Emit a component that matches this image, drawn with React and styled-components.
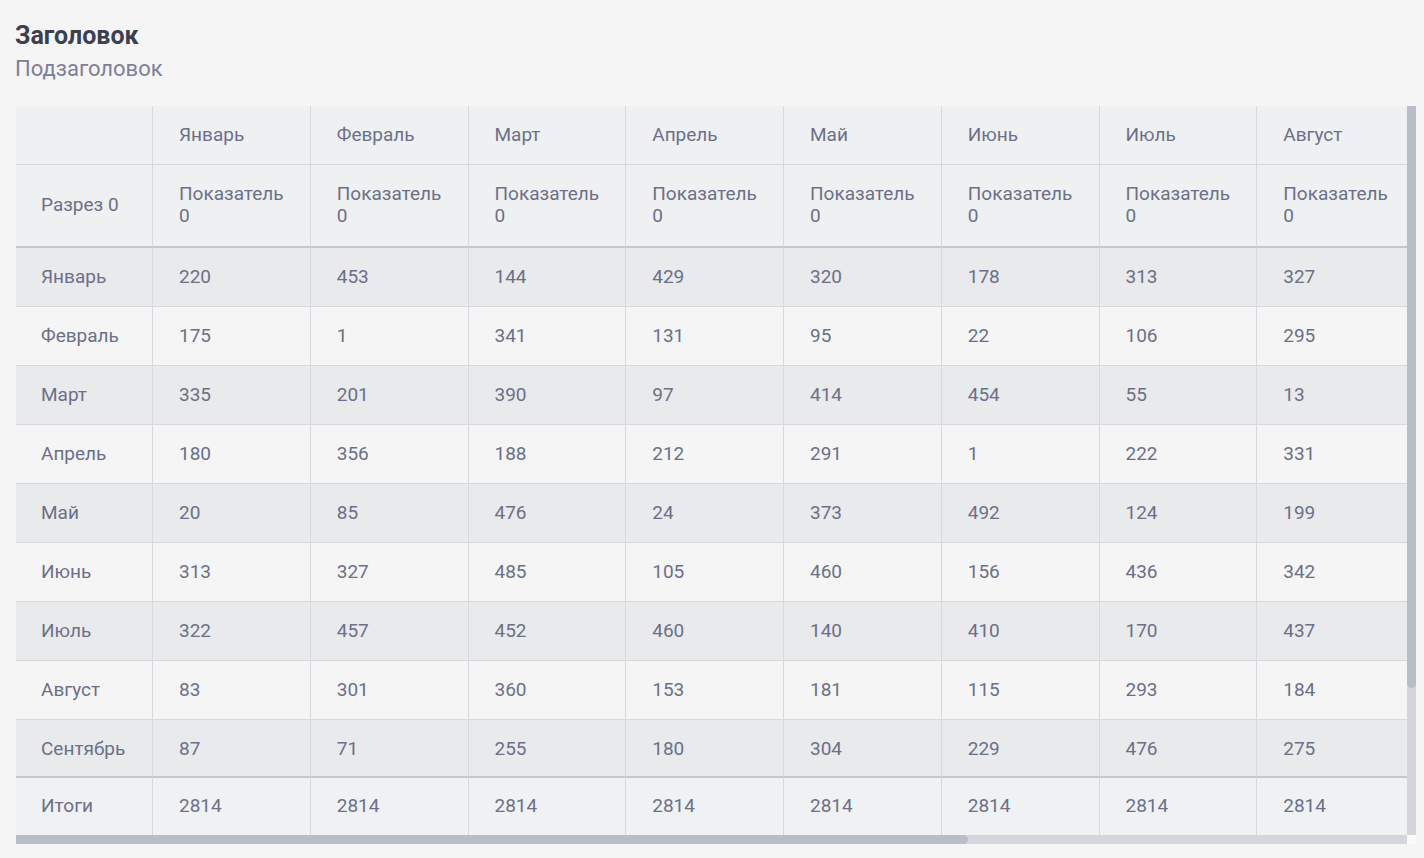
import React from 'react'
import styled, { createGlobalStyle } from 'styled-components'

const MONTHS = [
  'Январь', 'Февраль', 'Март', 'Апрель', 'Май', 'Июнь',
  'Июль', 'Август', 'Сентябрь', 'Октябрь', 'Ноябрь', 'Декабрь',
]

// visible part of the grid: 9 rows x 8 columns
const DATA = [
  [220, 453, 144, 429, 320, 178, 313, 327],
  [175, 1, 341, 131, 95, 22, 106, 295],
  [335, 201, 390, 97, 414, 454, 55, 13],
  [180, 356, 188, 212, 291, 1, 222, 331],
  [20, 85, 476, 24, 373, 492, 124, 199],
  [313, 327, 485, 105, 460, 156, 436, 342],
  [322, 457, 452, 460, 140, 410, 170, 437],
  [83, 301, 360, 153, 181, 115, 293, 184],
  [87, 71, 255, 180, 304, 229, 476, 275],
]

const COLS = MONTHS.slice(0, 8)
const ROWS = MONTHS.slice(0, 9)

const GlobalStyle = createGlobalStyle`
  body {
    margin: 0;
    background: #f5f5f5;
    font-family: Roboto, "Noto Sans", sans-serif;
  }
`

const Page = styled.div`
  padding: 21px 8px 14px 16px;
`

const Title = styled.h1`
  margin: 0 0 0 -1px;
  font-size: 25px;
  line-height: 30px;
  font-weight: 700;
  color: #3b404e;
`

const Subtitle = styled.div`
  margin: 4px 0 0 -1px;
  font-size: 22px;
  line-height: 28px;
  color: #7b8098;
`

const Frame = styled.div`
  margin-top: 23px;
  display: grid;
  grid-template-columns: 1391px 9px;
  grid-template-rows: 729px 9px;
`

const Viewport = styled.div`
  overflow: hidden;
  position: relative;
`

const Track = styled.div`
  background: #d4d6db;
  display: flex;
  flex-direction: ${(p) => (p.$vertical ? 'column' : 'row')};
`

const Thumb = styled.div`
  background: #b9bdc6;
  border-radius: ${(p) => (p.$vertical ? '0 0 5px 5px' : '0 5px 5px 0')};
  ${(p) => (p.$vertical ? `height: ${p.$size}px;` : `width: ${p.$size}px;`)}
`

const Corner = styled.div`
  background: #fafafa;
`

const Table = styled.table`
  border-collapse: separate;
  border-spacing: 0;
  table-layout: fixed;
  width: ${137 + 157.75 * 8}px;
  font-size: 19px;
  line-height: 22px;
  color: #6b7088;
`

const Cell = styled.td`
  padding: 18px 20px 18px 26px;
  border-right: 1px solid #d7d9de;
  border-bottom: 1px solid #d7d9de;
  text-align: left;
  font-weight: 400;
  white-space: nowrap;
  vertical-align: ${(p) => (p.$top ? 'top' : 'middle')};
  background: ${(p) => p.$bg};

  &:first-child {
    padding-left: 25px;
  }
`

const HeadCell = styled(Cell).attrs({ as: 'th' })`
  background: #eff0f2;
`

const SubHeadCell = styled(HeadCell)`
  padding-bottom: 19px;
  border-bottom: 2px solid #c4c7ce;
  white-space: normal;
`

const FootCell = styled(Cell)`
  position: sticky;
  bottom: 0;
  padding: 17px 20px 18px 26px;
  background: #f0f1f3;
  border-top: 2px solid #c4c7ce;
  border-bottom: none;
`

export default function App() {
  return (
    <>
      <GlobalStyle />
      <Page>
        <Title>Заголовок</Title>
        <Subtitle>Подзаголовок</Subtitle>
        <Frame>
          <Viewport>
            <Table>
              <colgroup>
                <col style={{ width: 137 }} />
                {COLS.map((m) => (
                  <col key={m} style={{ width: 157.75 }} />
                ))}
              </colgroup>
              <thead>
                <tr>
                  <HeadCell />
                  {COLS.map((m) => (
                    <HeadCell key={m}>{m}</HeadCell>
                  ))}
                </tr>
                <tr>
                  <SubHeadCell>Разрез 0</SubHeadCell>
                  {COLS.map((m) => (
                    <SubHeadCell key={m} $top>
                      Показатель 0
                    </SubHeadCell>
                  ))}
                </tr>
              </thead>
              <tbody>
                {ROWS.map((m, i) => {
                  const bg = i % 2 === 0 ? '#e9eaec' : '#f5f5f6'
                  return (
                    <tr key={m}>
                      <Cell $bg={bg}>{m}</Cell>
                      {DATA[i].map((v, j) => (
                        <Cell key={j} $bg={bg}>{v}</Cell>
                      ))}
                    </tr>
                  )
                })}
              </tbody>
              <tfoot>
                <tr>
                  <FootCell>Итоги</FootCell>
                  {COLS.map((m) => (
                    <FootCell key={m}>2814</FootCell>
                  ))}
                </tr>
              </tfoot>
            </Table>
          </Viewport>
          <Track $vertical>
            <Thumb $vertical $size={582} />
          </Track>
          <Track>
            <Thumb $size={952} />
          </Track>
          <Corner />
        </Frame>
      </Page>
    </>
  )
}
